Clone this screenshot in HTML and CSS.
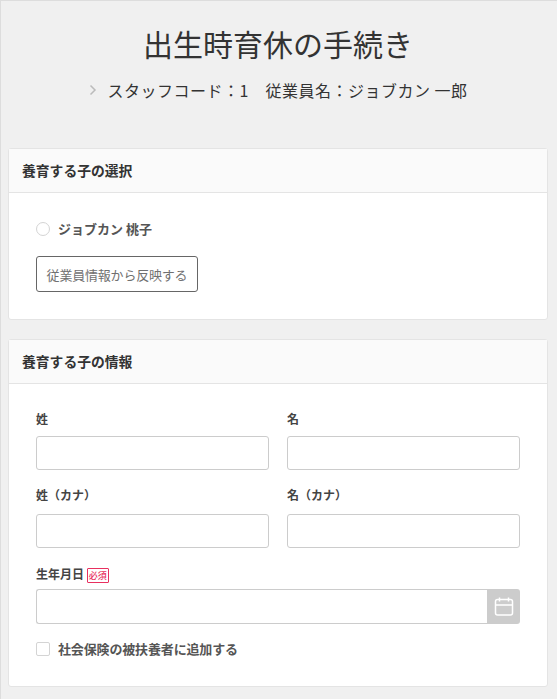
FILE: index.html
```html
<!DOCTYPE html>
<html lang="ja">
  <head>
    <meta charset="UTF-8" />
    <meta name="viewport" content="width=device-width, initial-scale=1.0" />
    <title>出生時育休の手続き</title>
    <link rel="stylesheet" href="styles.css">
  </head>
  <body>
    <div class="page">
      <h1>出生時育休の手続き</h1>
      <p class="staff">
        <svg class="staff-arrow" width="8" height="12" viewBox="0 0 8 12"><path d="M1.500 1.500 6 6l-4.500 4.500" fill="none" stroke="#bbb" stroke-width="1.500"/></svg>
        <span>スタッフコード：1　従業員名：ジョブカン 一郎</span>
      </p>

      <!-- 養育する子の選択 -->
      <section class="card card-select">
        <h2 class="card-head">養育する子の選択</h2>
        <div class="card-body">
          <label class="choice">
            <span class="radio"></span>
            <span>ジョブカン 桃子</span>
          </label>
          <button class="reflect-btn" type="button">従業員情報から反映する</button>
        </div>
      </section>

      <!-- 養育する子の情報 -->
      <section class="card">
        <h2 class="card-head">養育する子の情報</h2>
        <div class="card-body card-form">
          <div class="form-row">
            <div class="form-group">
              <label>姓</label>
              <input type="text" />
            </div>
            <div class="form-group">
              <label>名</label>
              <input type="text" />
            </div>
          </div>
          <div class="form-row form-row-last">
            <div class="form-group">
              <label>姓（カナ）</label>
              <input type="text" />
            </div>
            <div class="form-group">
              <label>名（カナ）</label>
              <input type="text" />
            </div>
          </div>
          <div class="form-group date-group">
            <label>生年月日 <span class="required">必須</span></label>
            <div class="date-field">
              <input type="text" />
              <span class="date-btn">
                <svg width="20" height="20" viewBox="0 0 20 20" fill="none" stroke="#fff" stroke-width="1.500"><rect x="1.500" y="2.500" width="17" height="15.500" rx="2"/><path d="M1.500 8h17M5.500 0.500v4M14.500 0.500v4"/></svg>
              </span>
            </div>
          </div>
          <label class="choice choice-check">
            <span class="checkbox"></span>
            <span>社会保険の被扶養者に追加する</span>
          </label>
        </div>
      </section>
    </div>
  </body>
</html>
```

FILE: styles.css
```css
* {
  box-sizing: border-box;
}

body {
  font-family: "Noto Sans CJK JP", "Noto Sans", sans-serif;
  background-color: #f0f0f0;
  color: #333;
  margin: 0;
  padding: 0;
}

.page {
  border-top: 1px solid #ddd;
  border-left: 1px solid #ddd;
  padding: 0 9px 12px 7px;
  height: 699px;
  overflow: hidden;
}

h1 {
  font-size: 30px;
  font-weight: 400;
  line-height: 44px;
  text-align: center;
  margin: 20px 0 0;
}

.staff {
  display: flex;
  justify-content: center;
  align-items: center;
  gap: 11px;
  font-size: 16px;
  line-height: 24px;
  letter-spacing: 0.5px;
  margin: 13px 0 46px;
}

.card {
  background-color: #fff;
  border: 1px solid #e4e4e4;
  border-radius: 3px;
  margin-bottom: 19px;
}

.card-head {
  font-size: 13.800px;
  font-weight: 700;
  line-height: 20px;
  background-color: #fafafa;
  border-bottom: 1px solid #e4e4e4;
  padding: 11px 13px 12px;
  margin: 0;
}

.card-body {
  padding: 26px 27px 27px;
}

.card-form {
  padding-top: 25px;
  padding-bottom: 27px;
}

.choice {
  display: flex;
  align-items: center;
  gap: 8px;
  font-size: 13px;
  font-weight: 700;
  line-height: 20px;
  color: #555;
}

.radio {
  width: 14px;
  height: 14px;
  border: 1px solid #d4d4d4;
  border-radius: 50%;
}

.checkbox {
  width: 14px;
  height: 14px;
  border: 1px solid #d4d4d4;
  border-radius: 2px;
}

.reflect-btn {
  display: block;
  font-family: inherit;
  font-size: 13px;
  letter-spacing: -0.2px;
  color: #707070;
  background-color: #fff;
  border: 1px solid #666;
  border-radius: 3px;
  width: 162px;
  height: 36px;
  margin-top: 17px;
  padding: 0;
}

.form-row {
  display: grid;
  grid-template-columns: 233px 233px;
  gap: 18px;
  margin-bottom: 15px;
}

.form-row-last {
  margin-bottom: 16px;
}

.form-group label {
  display: block;
  font-size: 12px;
  font-weight: 700;
  line-height: 20px;
  color: #444;
  margin-bottom: 7px;
}

.form-row-last label {
  margin-bottom: 9px;
}

.date-group label {
  margin-bottom: 5px;
}

.form-group input {
  display: block;
  width: 100%;
  height: 34px;
  border: 1px solid #ccc;
  border-radius: 3px;
  background-color: #fff;
}

.required {
  display: inline-block;
  font-size: 9px;
  font-weight: 500;
  line-height: 13px;
  color: #e8305f;
  border: 1px solid #e8305f;
  border-radius: 1px;
  padding: 0 1px;
  vertical-align: 0;
}

.date-field {
  display: flex;
}

.date-field input {
  flex: 1;
  height: 35px;
  border-right: 0;
  border-radius: 3px 0 0 3px;
}

.date-btn {
  display: flex;
  align-items: center;
  justify-content: center;
  width: 33px;
  height: 35px;
  background-color: #ccc;
  border-radius: 0 3px 3px 0;
}

.choice-check {
  margin-top: 15px;
  letter-spacing: -0.150px;
}
```
